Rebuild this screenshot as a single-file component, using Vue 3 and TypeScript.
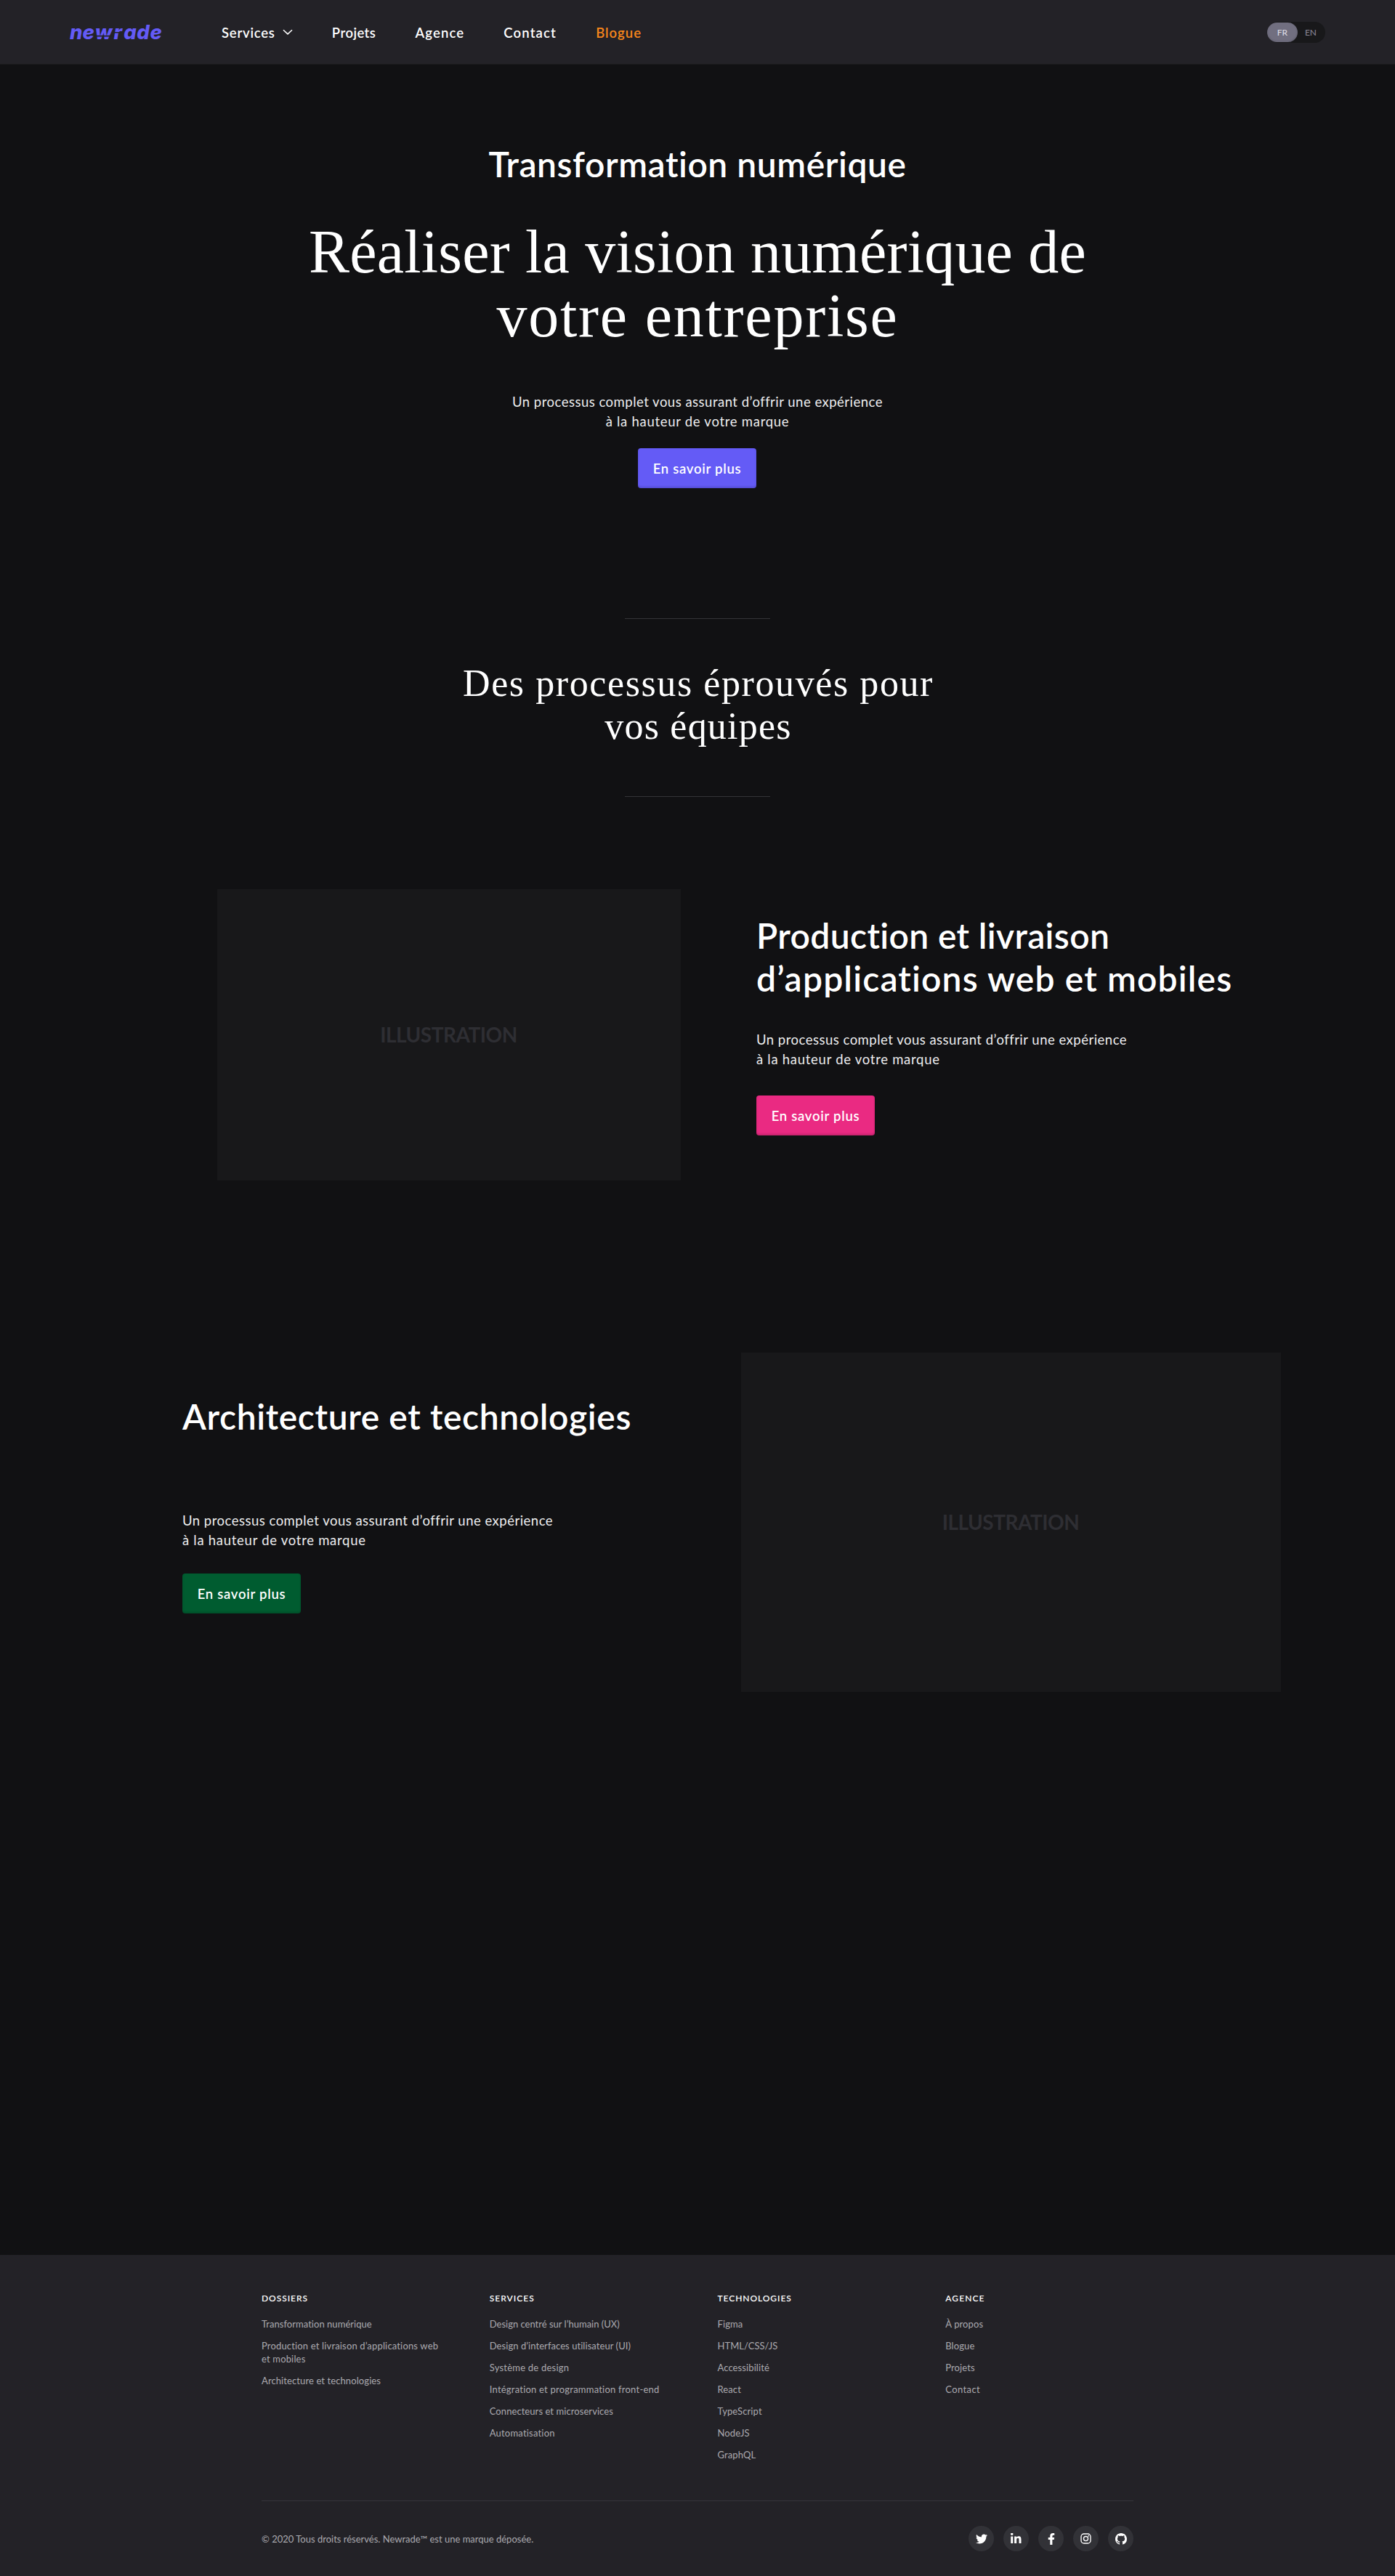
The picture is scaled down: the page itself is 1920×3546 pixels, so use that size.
<script setup lang="ts">
interface FooterLink {
  label: string
  tracking: number
}

interface FooterColumn {
  title: string
  tracking: number
  links: FooterLink[]
}

const link = (label: string, tracking = 0.1): FooterLink => ({ label, tracking })

const columns: FooterColumn[] = [
  {
    title: 'DOSSIERS',
    tracking: 0.95,
    links: [
      link('Transformation numérique', 0.04),
      link('Production et livraison d’applications web et mobiles', 0.16),
      link('Architecture et technologies', 0.1),
    ],
  },
  {
    title: 'SERVICES',
    tracking: 1,
    links: [
      link('Design centré sur l’humain (UX)', 0),
      link('Design d’interfaces utilisateur (UI)', 0.06),
      link('Système de design', 0.22),
      link('Intégration et programmation front-end', 0.22),
      link('Connecteurs et microservices', 0.07),
      link('Automatisation', 0.2),
    ],
  },
  {
    title: 'TECHNOLOGIES',
    tracking: 0.93,
    links: [
      link('Figma'),
      link('HTML/CSS/JS', 0.02),
      link('Accessibilité'),
      link('React'),
      link('TypeScript'),
      link('NodeJS'),
      link('GraphQL'),
    ],
  },
  {
    title: 'AGENCE',
    tracking: 1.1,
    links: [link('À propos'), link('Blogue'), link('Projets'), link('Contact', 0.4)],
  },
]

const navLinks = [
  { label: 'Projets', tracking: 0.45, accent: false },
  { label: 'Agence', tracking: 1.1, accent: false },
  { label: 'Contact', tracking: 1.15, accent: false },
  { label: 'Blogue', tracking: 1, accent: true },
]
</script>

<template>
  <div class="page">
    <header class="header">
      <svg class="logo" width="128" height="28" viewBox="0 0 128 28" aria-label="newrade">
        <text class="logo-text" x="0 17.6 34.8 60.6 74.2 92.2 110.6" y="23.2">newrade</text>
        <path class="logo-cut" d="M34 18.6h27M61 13.8h13" />
      </svg>
      <nav class="nav">
        <a class="nav-link services">
          <span>Services</span>
          <svg width="14" height="9" viewBox="0 0 14 9"><path d="M1 1.3l6 5.6 6-5.6" fill="none" stroke="#fff" stroke-width="1.5" /></svg>
        </a>
        <a
          v-for="item in navLinks"
          :key="item.label"
          class="nav-link"
          :class="{ accent: item.accent }"
          :style="{ letterSpacing: item.tracking + 'px' }"
        >{{ item.label }}</a>
      </nav>
      <div class="lang">
        <span class="lang-item active">FR</span>
        <span class="lang-item">EN</span>
      </div>
    </header>

    <main>
      <section class="hero">
        <h2 class="heading hero-kicker">Transformation numérique</h2>
        <h1 class="hero-title">
          <span class="title-a">Réaliser la vision numérique de</span>
          <span class="title-b">votre entreprise</span>
        </h1>
        <p class="copy">
          <span class="copy-a">Un processus complet vous assurant d’offrir une expérience</span>
          <span class="copy-b">à la hauteur de votre marque</span>
        </p>
        <a class="button violet">En savoir plus</a>
      </section>

      <section class="statement">
        <h2>
          <span class="statement-a">Des processus éprouvés pour</span>
          <span class="statement-b">vos équipes</span>
        </h2>
      </section>

      <section class="feature feature-apps">
        <div class="illustration">ILLUSTRATION</div>
        <div class="feature-body">
          <h2 class="heading">
            <span class="apps-a">Production et livraison</span>
            <span class="apps-b">d’applications web et mobiles</span>
          </h2>
          <p class="copy">
            <span class="copy-a">Un processus complet vous assurant d’offrir une expérience</span>
            <span class="copy-b">à la hauteur de votre marque</span>
          </p>
          <a class="button pink">En savoir plus</a>
        </div>
      </section>

      <section class="feature feature-tech">
        <div class="feature-body">
          <h2 class="heading"><span class="tech-a">Architecture et technologies</span></h2>
          <p class="copy">
            <span class="copy-a">Un processus complet vous assurant d’offrir une expérience</span>
            <span class="copy-b">à la hauteur de votre marque</span>
          </p>
          <a class="button green">En savoir plus</a>
        </div>
        <div class="illustration">ILLUSTRATION</div>
      </section>
    </main>

    <footer class="footer">
      <div class="footer-inner">
        <div class="columns">
          <div v-for="column in columns" :key="column.title" class="column">
            <h3 :style="{ letterSpacing: column.tracking + 'px' }">{{ column.title }}</h3>
            <ul>
              <li v-for="item in column.links" :key="item.label" :style="{ letterSpacing: item.tracking + 'px' }">{{ item.label }}</li>
            </ul>
          </div>
        </div>
        <div class="legal">
          <span>© 2020 Tous droits réservés. Newrade™ est une marque déposée.</span>
          <div class="socials">
            <a class="social" aria-label="Twitter">
              <svg width="16" height="16" viewBox="0 0 512 512"><path fill="#fff" d="M459.37 151.716c.325 4.548.325 9.097.325 13.645 0 138.72-105.583 298.558-298.558 298.558-59.452 0-114.68-17.219-161.137-47.106 8.447.974 16.568 1.299 25.34 1.299 49.055 0 94.213-16.568 130.274-44.832-46.132-.975-84.792-31.188-98.112-72.772 6.498.974 12.995 1.624 19.818 1.624 9.421 0 18.843-1.3 27.614-3.573-48.081-9.747-84.143-51.98-84.143-102.985v-1.299c13.969 7.797 30.214 12.67 47.431 13.319-28.264-18.843-46.781-51.005-46.781-87.391 0-19.492 5.197-37.36 14.294-52.954 51.655 63.675 129.3 105.258 216.365 109.807-1.624-7.797-2.599-15.918-2.599-24.04 0-57.828 46.782-104.934 104.934-104.934 30.213 0 57.502 12.67 76.67 33.137 23.715-4.548 46.456-13.32 66.599-25.34-7.798 24.366-24.366 44.833-46.132 57.827 21.117-2.273 41.584-8.122 60.426-16.243-14.292 20.791-32.161 39.308-52.628 54.253z" /></svg>
            </a>
            <a class="social" aria-label="LinkedIn">
              <svg width="14.5" height="14.5" viewBox="0 12 448 448"><path fill="#fff" d="M100.28 448H7.4V148.9h92.88zM53.79 108.1C24.09 108.1 0 83.5 0 53.8a53.79 53.79 0 0 1 107.58 0c0 29.7-24.1 54.3-53.79 54.3zM447.9 448h-92.68V302.4c0-34.7-.7-79.2-48.29-79.2-48.29 0-55.69 37.7-55.69 76.7V448h-92.78V148.9h89.08v40.8h1.3c12.4-23.5 42.69-48.3 87.88-48.3 94 0 111.28 61.9 111.28 142.3V448z" /></svg>
            </a>
            <a class="social" aria-label="Facebook">
              <svg width="10" height="16" viewBox="0 0 320 512"><path fill="#fff" d="M279.14 288l14.22-92.66h-88.91v-60.13c0-25.35 12.42-50.06 52.24-50.06h40.42V6.26S260.43 0 225.36 0c-73.22 0-121.08 44.38-121.08 124.72v70.62H22.89V288h81.39v224h100.17V288z" /></svg>
            </a>
            <a class="social" aria-label="Instagram">
              <svg width="15" height="15" viewBox="0 0 15 15" fill="none" stroke="#fff" stroke-width="1.35">
                <rect x="1" y="1" width="13" height="13" rx="3.8" />
                <circle cx="7.5" cy="7.5" r="3.05" />
                <circle cx="11.3" cy="3.7" r="0.85" fill="#fff" stroke="none" />
              </svg>
            </a>
            <a class="social" aria-label="GitHub">
              <svg width="16" height="16" viewBox="0 0 16 16"><path fill="#fff" d="M8 0C3.58 0 0 3.58 0 8c0 3.54 2.29 6.53 5.47 7.59.4.07.55-.17.55-.38 0-.19-.01-.82-.01-1.49-2.01.37-2.53-.49-2.69-.94-.09-.23-.48-.94-.82-1.13-.28-.15-.68-.52-.01-.53.63-.01 1.08.58 1.23.82.72 1.21 1.87.87 2.33.66.07-.52.28-.87.51-1.07-1.78-.2-3.64-.89-3.64-3.95 0-.87.31-1.59.82-2.15-.08-.2-.36-1.02.08-2.12 0 0 .67-.21 2.2.82.64-.18 1.32-.27 2-.27s1.36.09 2 .27c1.53-1.04 2.2-.82 2.2-.82.44 1.1.16 1.92.08 2.12.51.56.82 1.27.82 2.15 0 3.07-1.87 3.75-3.65 3.95.29.25.54.73.54 1.48 0 1.07-.01 1.93-.01 2.2 0 .21.15.46.55.38A8.01 8.01 0 0 0 16 8c0-4.42-3.58-8-8-8z" /></svg>
            </a>
          </div>
        </div>
      </div>
    </footer>
  </div>
</template>

<style>
body {
  background: #111113;
}
</style>

<style scoped>
.page {
  width: 1920px;
  background: #111113;
  color: #fff;
  font-family: Lato, sans-serif;
}
h1,
h2,
h3,
p,
ul {
  margin: 0;
  padding: 0;
}
h1 span,
h2 span,
p span {
  display: block;
  white-space: nowrap;
}

/* Header */
.header {
  box-sizing: border-box;
  height: 89px;
  padding: 0 96px;
  display: flex;
  align-items: center;
  background: #232227;
  border-bottom: 1px solid #19191b;
}
.logo {
  overflow: visible;
  margin-top: 2px;
}
.logo-text {
  font: italic 800 27.5px Inter, sans-serif;
  fill: #645bf6;
}
.logo-cut {
  stroke: #232227;
  stroke-width: 1.6;
}
.nav {
  display: flex;
  gap: 54.2px;
  margin: 1px 0 0 81px;
}
.nav-link {
  font-size: 18.5px;
  line-height: 22px;
  font-weight: 600;
}
.services {
  display: flex;
  align-items: center;
  gap: 10px;
  letter-spacing: 0.76px;
}
.accent {
  color: #f8861b;
}
.lang {
  box-sizing: border-box;
  width: 80px;
  height: 29px;
  padding: 1px 0;
  margin-left: auto;
  display: flex;
  border-radius: 15px;
  background: #18181a;
}
.lang-item {
  width: 36px;
  font-size: 12px;
  line-height: 27px;
  font-weight: 500;
  text-align: center;
  color: #858391;
}
.lang-item.active {
  width: 42px;
  border-radius: 14px;
  background: #716f80;
  box-shadow: inset 0 -1px 3px rgba(0, 0, 0, 0.15);
  color: #dad9e2;
}

/* Shared pieces */
.heading {
  font-size: 48px;
  line-height: 59px;
  font-weight: 600;
}
.copy {
  font-size: 18.5px;
  line-height: 27px;
  color: #ededef;
}
.copy-a {
  letter-spacing: 0.49px;
}
.copy-b {
  letter-spacing: 0.72px;
}
.button {
  display: block;
  width: 163px;
  height: 55px;
  border-radius: 4px;
  font-size: 18.5px;
  line-height: 56px;
  font-weight: 600;
  letter-spacing: 0.72px;
  text-align: center;
  box-shadow: inset 0 -2px 3px rgba(0, 0, 0, 0.16);
}
.violet {
  background: #645bf6;
}
.pink {
  background: #ea2a82;
}
.green {
  background: #005c30;
}
.illustration {
  box-sizing: border-box;
  padding: 0 1px 1px 0;
  display: flex;
  align-items: center;
  justify-content: center;
  background: #18181a;
  color: #2e2e33;
  font-size: 28px;
  font-weight: 700;
  letter-spacing: -0.5px;
}

/* Hero */
.hero {
  padding-top: 108px;
  display: flex;
  flex-direction: column;
  align-items: center;
  text-align: center;
}
.hero-kicker {
  line-height: 58px;
  letter-spacing: 0.55px;
}
.hero-title {
  margin-top: 48px;
  font: 400 84px/88px "Liberation Serif", serif;
}
.title-a {
  letter-spacing: 0.2px;
}
.title-b {
  letter-spacing: 1.77px;
}
.hero .copy {
  margin-top: 61px;
}
.hero .button {
  margin: 23px 1px 0 0;
}

/* Statement */
.statement {
  margin-top: 179px;
  display: flex;
  flex-direction: column;
  align-items: center;
  text-align: center;
}
.statement::before,
.statement::after {
  content: "";
  width: 200px;
  height: 1px;
  background: #343437;
}
.statement h2 {
  margin: 59px 0 67px 2px;
  font: 400 52px/59px "Liberation Serif", serif;
}
.statement-a {
  letter-spacing: 1.59px;
}
.statement-b {
  letter-spacing: 1.22px;
}

/* Features */
.feature {
  display: flex;
}
.feature-apps {
  margin-top: 127px;
  padding-left: 299px;
}
.feature-apps .illustration {
  width: 638px;
  height: 401px;
}
.feature-apps .feature-body {
  padding: 34px 0 0 104px;
}
.apps-a {
  letter-spacing: 0.36px;
}
.apps-b {
  letter-spacing: 1.15px;
}
.feature-apps .copy {
  margin-top: 42px;
}
.feature-apps .button {
  margin-top: 36px;
}
.feature-tech {
  margin-top: 237px;
  padding-bottom: 775px;
}
.feature-tech .feature-body {
  width: 769px;
  padding: 58px 0 0 251px;
}
.tech-a {
  letter-spacing: 0.62px;
}
.feature-tech .copy {
  margin-top: 101px;
}
.feature-tech .button {
  margin-top: 32px;
}
.feature-tech .illustration {
  width: 743px;
  height: 467px;
}

/* Footer */
.footer {
  box-sizing: border-box;
  height: 442px;
  padding-top: 51px;
  background: #232227;
}
.footer-inner {
  width: 1200px;
  margin: 0 auto;
}
.columns {
  display: grid;
  grid-template-columns: repeat(4, 1fr);
  column-gap: 55px;
  height: 287px;
}
.column h3 {
  font-size: 12px;
  line-height: 18px;
  font-weight: 600;
}
.column ul {
  margin-top: 17px;
  display: flex;
  flex-direction: column;
  gap: 12px;
  list-style: none;
}
.column li {
  max-width: 250px;
  font-size: 13px;
  line-height: 18px;
  color: #abaab0;
}
.legal {
  padding-top: 34px;
  display: flex;
  align-items: center;
  justify-content: space-between;
  border-top: 1px solid #36353b;
  font-size: 13px;
  color: #abaab0;
}
.socials {
  display: flex;
  gap: 13px;
}
.social {
  width: 35px;
  height: 35px;
  display: flex;
  align-items: center;
  justify-content: center;
  border-radius: 50%;
  background: #323237;
}
</style>
